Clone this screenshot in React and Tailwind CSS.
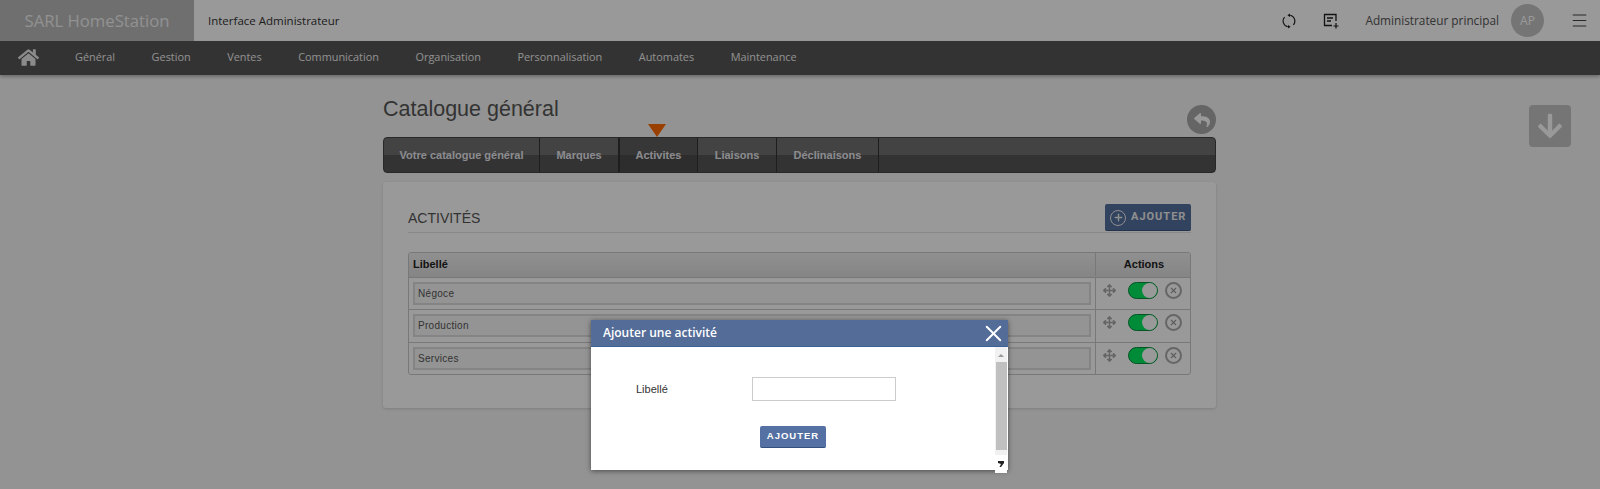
import React from 'react';
import { FaHome, FaReply, FaArrowDown, FaArrowsAlt } from 'react-icons/fa';
import { X, Menu, Plus } from 'lucide-react';

const openSans = 'font-["Open_Sans",sans-serif]';
const arial = 'font-["Liberation_Sans",Arial,sans-serif]';

const navItems = ['Général', 'Gestion', 'Ventes', 'Communication', 'Organisation', 'Personnalisation', 'Automates', 'Maintenance'];

const tabs = [
  { label: 'Votre catalogue général', width: 'w-[156px]' },
  { label: 'Marques', width: 'w-[79px]' },
  { label: 'Activites', width: 'w-[79px]', active: true },
  { label: 'Liaisons', width: 'w-[79px]' },
  { label: 'Déclinaisons', width: 'w-[102px]' }
];

const rows = [
  { label: 'Négoce', height: 'h-[32px]' },
  { label: 'Production', height: 'h-[33px]' },
  { label: 'Services', height: 'h-[31px]' }
];

const SyncIcon = () => (
  <svg width="16" height="16" viewBox="0 0 16 16" fill="none" stroke="#1f1f1f" strokeWidth="1.1">
    <path d="M9.2 2.2A6 6 0 0 1 12.4 12" />
    <path d="M6.8 13.8A6 6 0 0 1 3.6 4" />
    <path d="M9 0.4 6.4 2.2 9 4z" fill="#1f1f1f" stroke="none" />
    <path d="M7 12 9.6 13.8 7 15.6z" fill="#1f1f1f" stroke="none" />
  </svg>
);

const NoteAddIcon = () => (
  <svg width="16" height="16" viewBox="0 0 16 16" fill="none" stroke="#1f1f1f" strokeWidth="1.3">
    <path d="M9 12.5H1.5V1.5H13V8" />
    <path d="M4 5h6M4 8h4" />
    <path d="M13 10v5.5M10.5 13H15.5" strokeWidth="1.2" />
  </svg>
);

const Toggle = () => (
  <div className="flex h-[17px] w-[30px] items-center justify-end rounded-full border border-[#0a8a3c] bg-[#00e860]">
    <div className="h-[15px] w-[15px] rounded-full bg-white"></div>
  </div>
);

const ActivityRow = ({ label, height }) => (
  <div className={`flex border-b border-[#c9c9c9] last:border-b-0 ${height}`}>
    <div className="flex-1 px-[4px] pt-[4px]">
      <div className="flex h-[23px] items-center border-2 border-[#dcdcdc] bg-[#f7f7f7] pl-[3px] text-[10px] tracking-[0.3px] text-[#555]">
        {label}
      </div>
    </div>
    <div className="flex w-[95px] border-l border-[#c9c9c9] pl-[7px] pt-[4px]">
      <FaArrowsAlt className="mt-[2px] text-[13px] text-[#a8a8a8]" />
      <div className="ml-[12px]"><Toggle /></div>
      <div className="ml-[7px] flex h-[17px] w-[17px] items-center justify-center rounded-full border-2 border-[#aaa]">
        <X size={9} strokeWidth={3} className="text-[#999]" />
      </div>
    </div>
  </div>
);

const App = () => {
  return (
    <div className={`relative h-[489px] overflow-hidden bg-[#f5f5f5] ${arial}`}>
      {/* Top bar */}
      <header className={`flex h-[41px] items-center bg-white ${openSans}`}>
        <div className="flex h-full w-[194px] items-center justify-center bg-[#b9b9b9] text-[16.7px] text-[#f2f2f2]">
          SARL HomeStation
        </div>
        <div className="ml-[14px] text-[11.5px] text-[#333]">Interface Administrateur</div>
        <div className="ml-auto flex items-center">
          <SyncIcon />
          <div className="ml-[26px]"><NoteAddIcon /></div>
          <div className="ml-[26px] text-[11.8px] text-[#555]">Administrateur principal</div>
          <div className="ml-[12px] flex h-[33px] w-[33px] items-center justify-center rounded-full bg-[#c4c4c4] text-[12px] text-white">AP</div>
          <Menu size={19} strokeWidth={1.4} className="ml-[26px] mr-[11px] text-[#444]" />
        </div>
      </header>

      {/* Main nav */}
      <nav className={`flex h-[34px] items-center bg-[#555] pb-[2px] shadow-[0_2px_3px_rgba(0,0,0,0.25)] ${openSans}`}>
        <FaHome className="ml-[18px] text-[21px] text-[#e8e8e8]" />
        <div className="ml-[36px] flex gap-[36.5px] text-[10.9px] text-[#f0f0f0]">
          {navItems.map((item) => (
            <span key={item}>{item}</span>
          ))}
        </div>
      </nav>

      {/* Content */}
      <main className="relative ml-[383px] w-[833px]">
        <h1 className="pt-[22px] text-[21.5px] leading-[25px] text-[#555]">Catalogue général</h1>

        <div className="absolute right-0 top-[30px] flex h-[29px] w-[29px] items-center justify-center rounded-full bg-[#a8a8a8]">
          <FaReply className="text-[16px] text-white" />
        </div>

        <div className="relative mt-[15px] flex h-[36px] rounded-[4px] border border-[#444] bg-[linear-gradient(#707070_50%,#555_50%)]">
          {tabs.map((tab) => (
            <div
              key={tab.label}
              className={`relative flex items-center justify-center border-r border-[#333] text-[11px] font-bold text-[#e8e8ee] ${tab.width} ${tab.active ? 'border-l bg-[linear-gradient(#5c5c5c_50%,#4c4c4c_50%)]' : ''}`}
            >
              {tab.active && (
                <span className="absolute -top-[14px] left-[28px] h-0 w-0 border-x-[9px] border-t-[13px] border-x-transparent border-t-[#ff6a00]"></span>
              )}
              {tab.label}
            </div>
          ))}
        </div>

        <section className="mt-[9px] h-[226px] rounded-[3px] bg-white px-[25px] pt-[22px] shadow-[0_1px_3px_rgba(0,0,0,0.15)]">
          <div className="flex h-[29px] items-start justify-between border-b border-[#e3e3e3]">
            <h2 className="mt-[4px] text-[14px] text-[#555]">ACTIVITÉS</h2>
            <button className="flex h-[27px] w-[86px] items-center rounded-[2px] border-b border-[#3c5680] bg-[#54709f] pl-[5px] pt-[1px] font-['Roboto',sans-serif] text-[11px] font-bold tracking-[1px] text-[#eee]">
              <span className="flex h-[16px] w-[16px] items-center justify-center rounded-full border border-[#eee]">
                <Plus size={11} strokeWidth={3} />
              </span>
              <span className="ml-[5px]">AJOUTER</span>
            </button>
          </div>

          <div className="mt-[19px] overflow-hidden rounded-[3px] border border-[#c9c9c9]">
            <div className="flex h-[25px] border-b border-[#c9c9c9] bg-[linear-gradient(#f0f0f0,#dedede)] pb-[1px] text-[11px] font-bold text-[#222]">
              <div className="flex flex-1 items-center pl-[4px]">Libellé</div>
              <div className="flex w-[95px] items-center justify-center border-l border-[#c9c9c9] pl-[2px]">Actions</div>
            </div>
            {rows.map((row) => (
              <ActivityRow key={row.label} label={row.label} height={row.height} />
            ))}
          </div>
        </section>
      </main>

      <div className="absolute left-[1529px] top-[105px] flex h-[42px] w-[42px] items-center justify-center rounded-[4px] bg-[#c4c4c4]">
        <FaArrowDown className="text-[28px] text-white" />
      </div>

      {/* Dim overlay + dialog */}
      <div className="absolute inset-0 bg-black/40"></div>
      <div className="absolute left-[591px] top-[320px] flex h-[150px] w-[417px] flex-col bg-white shadow-[0_1px_5px_rgba(0,0,0,0.5)]">
        <div className={`flex h-[27px] items-center justify-between border-b border-[#3e6296] bg-[#536c98] pl-[12px] text-[12px] font-semibold text-white ${openSans}`}>
          Ajouter une activité
          <X size={27} strokeWidth={1.7} className="mr-[1px] shrink-0" />
        </div>
        <div className="flex flex-1 pr-[1px]">
          <div className="flex-1">
            <div className="flex items-center pl-[45px] pt-[30px]">
              <label className="w-[116px] text-[11px] text-[#333]">Libellé</label>
              <input type="text" className="h-[24px] w-[144px] border border-[#ccc] bg-white" />
            </div>
            <div className="mt-[25px] ml-[169px]">
              <button className="flex h-[22px] w-[66px] items-center justify-center rounded-[2px] border-b border-[#34507f] bg-[#5571a3] text-[9.5px] font-bold tracking-[1px] text-white">
                AJOUTER
              </button>
            </div>
          </div>
          <div className="flex w-[12px] flex-col items-center bg-[#f1f1f1]">
            <span className="mt-[7px] h-0 w-0 border-x-[3px] border-b-[3px] border-x-transparent border-b-[#999]"></span>
            <div className="mt-[5px] h-[88px] w-[11px] bg-[#c0c0c0]"></div>
            <div className="mt-[5px] flex h-[18px] w-full items-center justify-center bg-white">
              <svg width="8" height="8" viewBox="0 0 8 8"><path d="M1 1h6v2L4 7H2.5L4 4 1 3z" fill="#222" /></svg>
            </div>
          </div>
        </div>
      </div>
    </div>
  );
};

export default App;
